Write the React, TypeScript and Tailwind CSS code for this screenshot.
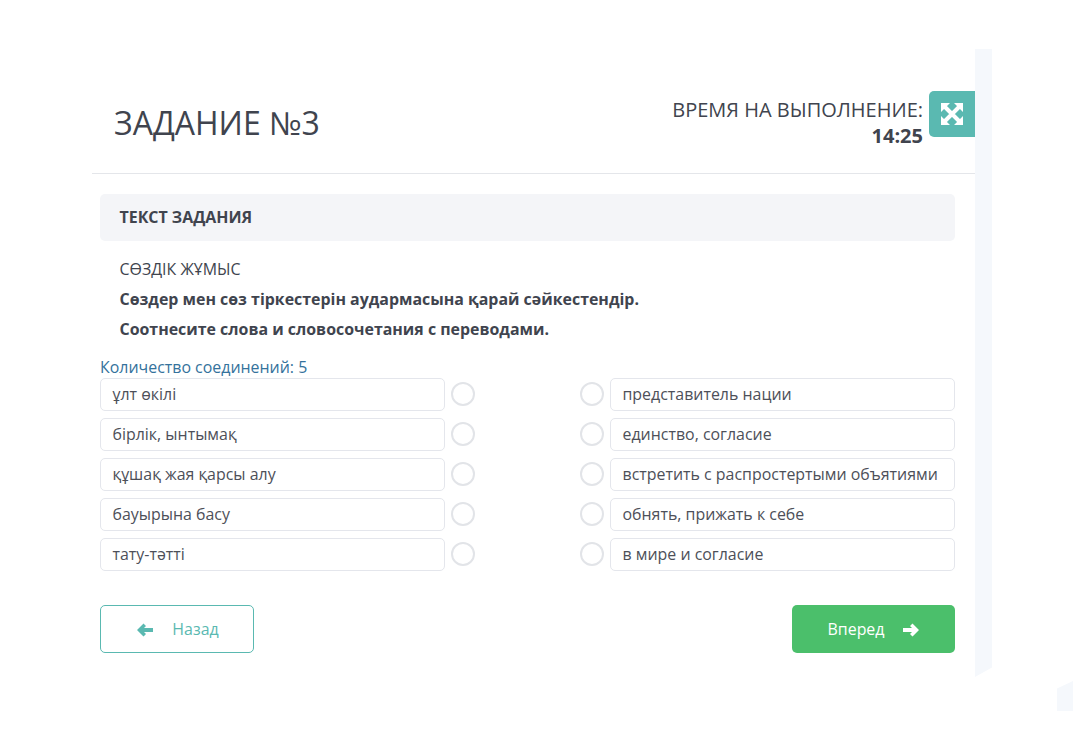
const rows = [
  ['ұлт өкілі', 'представитель нации'],
  ['бірлік, ынтымақ', 'единство, согласие'],
  ['құшақ жая қарсы алу', 'встретить с распростертыми объятиями'],
  ['бауырына басу', 'обнять, прижать к себе'],
  ['тату-тәтті', 'в мире и согласие'],
]

function Option({ text }: { text: string }) {
  return (
    <div className="flex h-[33px] w-[345px] items-center rounded-[5px] border border-[#e4e6ec] bg-white pl-[11.5px] text-[15.93px] text-[#4d5059]">
      {text}
    </div>
  )
}

function Dot() {
  return <div className="size-6 rounded-full border-2 border-[#e2e4e8] bg-white" />
}

function ExpandIcon() {
  return (
    <svg viewBox="0 0 22 22" className="size-[22px]" fill="currentColor">
      <path d="M0 0H9L0 9ZM22 0V9L13 0ZM0 22V13L9 22ZM22 22H13L22 13Z" />
      <path d="M3 3L19 19M19 3L3 19" stroke="currentColor" strokeWidth="4" />
    </svg>
  )
}

function ArrowLeft() {
  return (
    <svg viewBox="0 0 16 14" className="h-[14px] w-4" fill="currentColor">
      <path d="M0 7L6.5 0.5L9 3L7 5H16V9H7L9 11L6.5 13.5Z" />
    </svg>
  )
}

function ArrowRight() {
  return (
    <svg viewBox="0 0 16 14" className="h-[14px] w-4" fill="currentColor">
      <path d="M16 7L9.5 0.5L7 3L9 5H0V9H9L7 11L9.5 13.5Z" />
    </svg>
  )
}

export default function App() {
  return (
    <div className="relative flex h-[746px] w-[1078px] overflow-hidden bg-white pt-[49px] pl-[92px] font-['Open_Sans',sans-serif] text-[#40444e]">
      <main className="w-[883px]">
        {/* ── Header ─────────────────────────────────────────── */}
        <header className="flex h-[125px] items-start justify-between border-b border-[#e4e6ea] pt-[42px] pl-[22px]">
          <h1 className="mt-[6px] text-[32px] leading-[52px] font-normal">ЗАДАНИЕ №3</h1>
          <div className="flex items-start">
            <div className="mt-[6px] mr-[6px] text-right text-[20px] leading-[26px]">
              <div>ВРЕМЯ НА ВЫПОЛНЕНИЕ:</div>
              <div className="font-bold">14:25</div>
            </div>
            <button className="flex size-[46px] items-center justify-center rounded-l-[5px] bg-[#5ab9b1] text-white">
              <ExpandIcon />
            </button>
          </div>
        </header>

        <section className="ml-2 w-[855px] pt-5">
          <div className="flex h-[47px] items-center rounded-[5px] bg-[#f4f5f8] pt-px pl-[19.5px] text-[15.93px] font-bold">
            ТЕКСТ ЗАДАНИЯ
          </div>
          <div className="mt-[13px] pl-[19.5px] text-[15.93px] leading-[30px]">
            <p>СӨЗДІК ЖҰМЫС</p>
            <p className="font-bold">Сөздер мен сөз тіркестерін аудармасына қарай сәйкестендір.</p>
            <p className="font-bold">Соотнесите слова и словосочетания с переводами.</p>
          </div>

          <div className="mt-3 text-[15.93px] leading-[22px] text-[#34729c]">Количество соединений: 5</div>
          <div className="flex flex-col gap-[7px]">
            {rows.map(([left, right]) => (
              <div key={left} className="flex items-start">
                <Option text={left} />
                <div className="mt-1 ml-[6px]"><Dot /></div>
                <div className="mt-1 ml-[105px]"><Dot /></div>
                <div className="ml-[6px]"><Option text={right} /></div>
              </div>
            ))}
          </div>

          <div className="mt-[34px] flex justify-between">
            <button className="flex h-12 w-[154px] items-center justify-center gap-[19px] rounded-[5px] border border-[#5ab9b1] bg-white pt-px pl-[2px] text-[15.93px] text-[#5ab9b1]">
              <ArrowLeft />
              Назад
            </button>
            <button className="flex h-12 w-[163px] items-center justify-center gap-[19px] rounded-[5px] bg-[#4bbf6b] pt-px text-[15.93px] text-white">
              Вперед
              <ArrowRight />
            </button>
          </div>
        </section>
      </main>

      {/* ── Decorative strip ───────────────────────────────── */}
      <div className="h-[628px] w-[17px] bg-[#f5f8fc] [clip-path:polygon(0_0,100%_0,100%_98.5%,0_100%)]" />
      <div className="absolute top-[681px] left-[1057px] h-[30px] w-[16px] bg-[#f5f8fc] [clip-path:polygon(0_25%,100%_0,100%_100%,0_100%)]" />
    </div>
  )
}
